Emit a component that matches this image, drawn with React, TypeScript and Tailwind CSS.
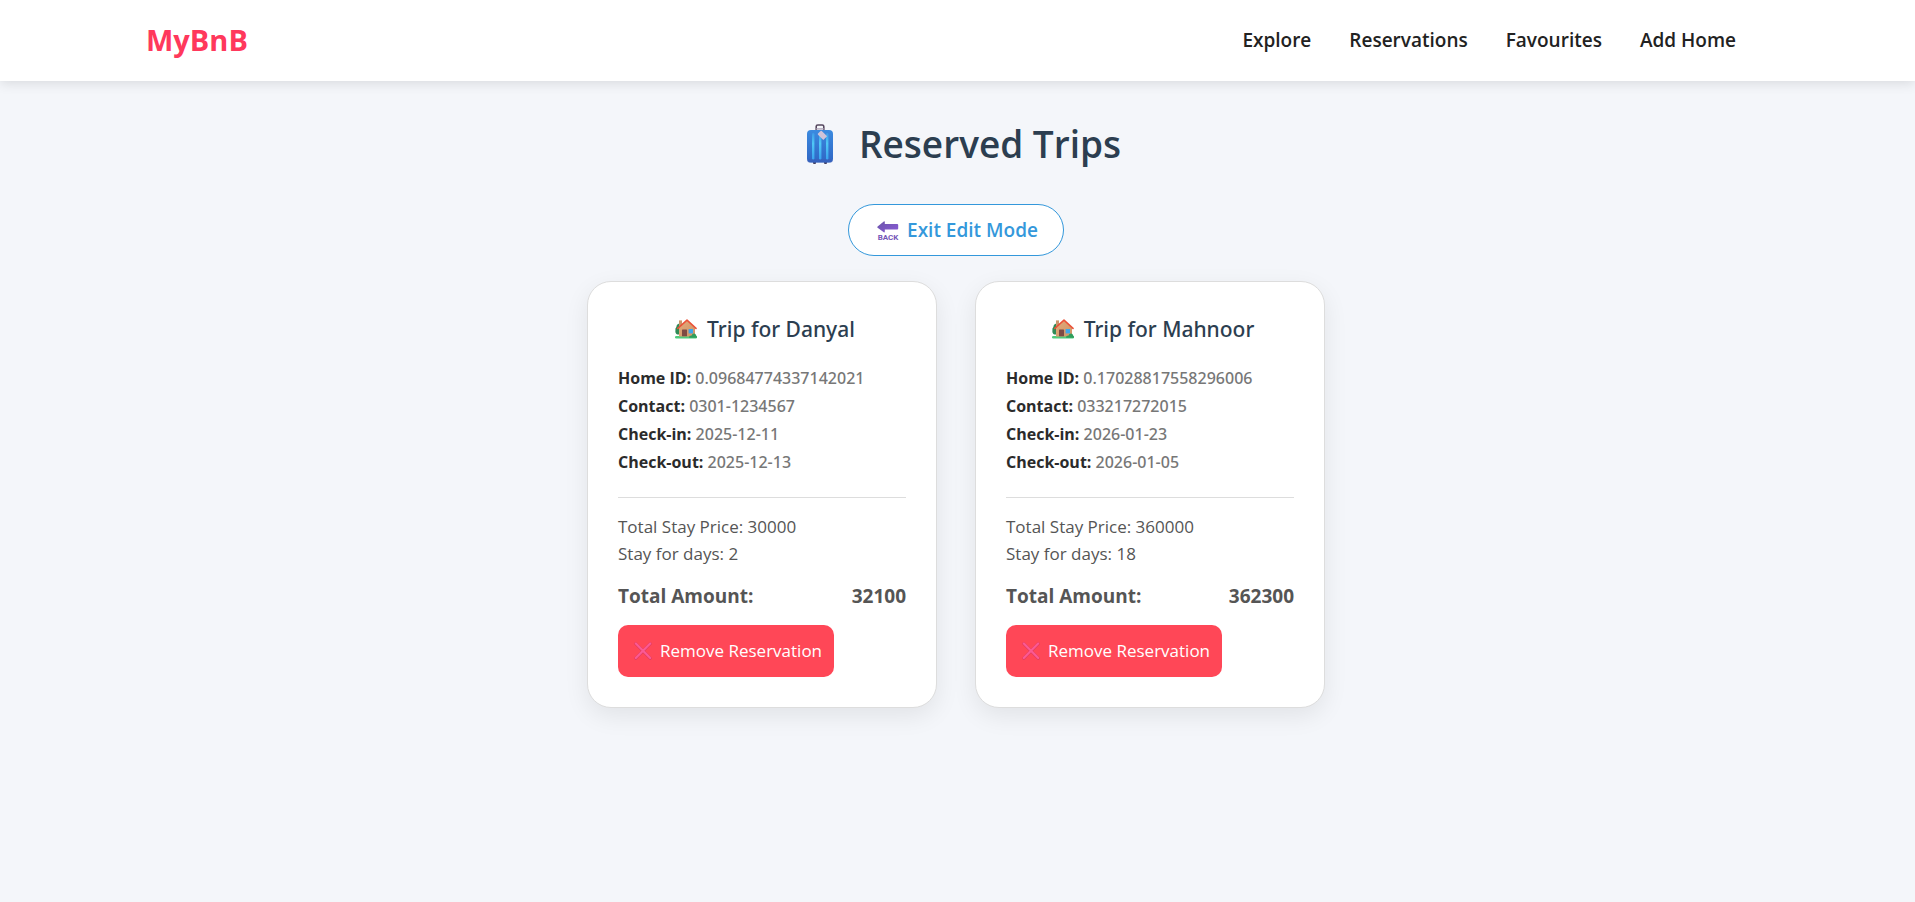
import type { ReactNode } from "react";

type Trip = {
  name: string;
  homeId: string;
  contact: string;
  checkIn: string;
  checkOut: string;
  price: number;
  days: number;
  total: number;
};

const trips: Trip[] = [
  {
    name: "Danyal",
    homeId: "0.09684774337142021",
    contact: "0301-1234567",
    checkIn: "2025-12-11",
    checkOut: "2025-12-13",
    price: 30000,
    days: 2,
    total: 32100,
  },
  {
    name: "Mahnoor",
    homeId: "0.17028817558296006",
    contact: "033217272015",
    checkIn: "2026-01-23",
    checkOut: "2026-01-05",
    price: 360000,
    days: 18,
    total: 362300,
  },
];

const links = ["Explore", "Reservations", "Favourites", "Add Home"];

function SuitcaseIcon() {
  return (
    <svg viewBox="0 0 26 40" className="h-10 w-[26px]" aria-hidden="true">
      <defs>
        <linearGradient id="case-body" x1="0" y1="0" x2="0" y2="1">
          <stop offset="0" stopColor="#3b8be0" />
          <stop offset="1" stopColor="#2f66c4" />
        </linearGradient>
        <linearGradient id="case-rib" x1="0" y1="0" x2="0" y2="1">
          <stop offset="0" stopColor="#3f9ae6" />
          <stop offset="0.4" stopColor="#4fc8f6" />
          <stop offset="1" stopColor="#3aa3ee" />
        </linearGradient>
      </defs>
      <path d="M9.2 6V2.6Q9.2 1 10.8 1h4.4q1.6 0 1.6 1.6V6" fill="none" stroke="#56485f" strokeWidth="1.6" />
      <path d="M9 4.9h8" stroke="#a79bb0" strokeWidth="1.2" />
      <rect x="6" y="37" width="3" height="3" rx="1" fill="#45405f" />
      <rect x="17" y="37" width="3" height="3" rx="1" fill="#45405f" />
      <rect x="0" y="6" width="26" height="32.5" rx="4" fill="url(#case-body)" />
      <rect x="0.4" y="35" width="25.2" height="3.4" rx="1.7" fill="#3c5fb8" opacity=".6" />
      <rect x="5" y="9" width="2.4" height="26.5" rx="1.2" fill="url(#case-rib)" />
      <rect x="12" y="9" width="2.4" height="26.5" rx="1.2" fill="url(#case-rib)" />
      <rect x="19" y="9" width="2.4" height="26.5" rx="1.2" fill="url(#case-rib)" />
      <path d="M11 9.6 13.6 7q.6-.5 1.2 0l5.3 5.2-3.8 3.9-5.3-5.3q-.5-.6 0-1.2Z" fill="#cfc3d8" />
    </svg>
  );
}

function BackIcon() {
  return (
    <svg viewBox="0 0 22 22" className="size-[22px] overflow-visible" aria-hidden="true">
      <defs>
        <linearGradient id="back-arrow" x1="0" y1="0" x2="1" y2="1">
          <stop offset="0" stopColor="#6a55a8" />
          <stop offset="1" stopColor="#8a5ad8" />
        </linearGradient>
      </defs>
      <path
        d="M.6 7.4 6.8 2.4q1-.6 1 .6v2h12.4q1 0 1 1v3.6q0 1-1 1H7.8v2q0 1.2-1 .6L.6 8.8q-.8-.7 0-1.4Z"
        fill="url(#back-arrow)"
      />
      <text
        x="11"
        y="21.4"
        textAnchor="middle"
        fontSize="8"
        fontWeight="700"
        fill="#7556b8"
        className="font-[Roboto,sans-serif]"
      >
        BACK
      </text>
    </svg>
  );
}

function HouseIcon() {
  return (
    <svg viewBox="0 0 22 20" className="h-5 w-[22px]" aria-hidden="true">
      <defs>
        <linearGradient id="house-wall" x1="0" y1="0" x2="1" y2="1">
          <stop offset="0" stopColor="#e2ab7a" />
          <stop offset="1" stopColor="#cf9468" />
        </linearGradient>
      </defs>
      <path d="M4.4 4.4Q1.4 5 1.4 8 0 9.4.4 11.4 0 14.4 2.4 15.4H5Z" fill="#2f8a56" />
      <rect x="0" y="17" width="22" height="2.6" rx="1.3" fill="#4fcb7c" />
      <rect x="4" y="1.4" width="3" height="6" fill="#c9956b" />
      <path d="M4 9 12 1.6 20 9v8.4H4Z" fill="url(#house-wall)" />
      <path d="M2.8 9.4 12 1.2l9 8.2" fill="none" stroke="#ea5238" strokeWidth="1.6" strokeLinecap="round" strokeLinejoin="round" />
      <rect x="7" y="10.4" width="5" height="6.8" rx=".5" fill="#7d4a44" />
      <rect x="13.6" y="10" width="4.4" height="4.4" fill="#3ea6ea" />
      <path d="M14 18.8q0-2.4 2.6-2.4.6-2 2.4-2t2.2 2.2q.8.4.8 2.2Z" fill="#2f9e5c" />
    </svg>
  );
}

function CrossIcon() {
  return (
    <svg viewBox="0 0 18 18" className="size-[18px]" aria-hidden="true">
      <path d="M1.8 1.8 16.2 16.2M16.2 1.8 1.8 16.2" stroke="#dd3a62" strokeWidth="3" strokeLinecap="round" />
      <path d="M1.8 1.6 16.2 16M16.2 1.6 1.8 16" stroke="#fb5a94" strokeWidth="2.1" strokeLinecap="round" />
    </svg>
  );
}

function Detail({ label, children }: { label: string; children: ReactNode }) {
  return (
    <p>
      <strong className="font-['Open_Sans'] font-bold text-[#2b2b2b]">{label}:</strong> {children}
    </p>
  );
}

function TripCard({ trip }: { trip: Trip }) {
  return (
    <article className="w-[350px] rounded-3xl border border-[#dddddd] bg-white p-[30px] text-[#555555] shadow-[0_8px_25px_rgba(0,0,0,0.08)]">
      <h2 className="flex items-center justify-center gap-2.5 pl-1.5 font-['Noto_Sans'] text-[21px] leading-[34px] font-medium text-[#2c3e50]">
        <HouseIcon />
        Trip for {trip.name}
      </h2>
      <div className="mt-[18px] font-['Noto_Sans'] text-[16px] leading-7 font-medium text-[#777777]">
        <Detail label="Home ID">{trip.homeId}</Detail>
        <Detail label="Contact">{trip.contact}</Detail>
        <Detail label="Check-in">{trip.checkIn}</Detail>
        <Detail label="Check-out">{trip.checkOut}</Detail>
      </div>
      <hr className="mt-[21px] mb-[15px] border-[#dddddd]" />
      <div className="text-[17px] leading-[27px]">
        <p>Total Stay Price: {trip.price}</p>
        <p>Stay for days: {trip.days}</p>
      </div>
      <p className="mt-[13px] flex justify-between text-[19px] leading-8 font-bold">
        <span>Total Amount:</span>
        <span>{trip.total}</span>
      </p>
      <button
        type="button"
        className="mt-[13px] flex h-[52px] items-center gap-2 rounded-[10px] bg-[#ff4757] pr-3 pl-4 text-[17px] text-white"
      >
        <CrossIcon />
        Remove Reservation
      </button>
    </article>
  );
}

export default function App() {
  return (
    <div className="min-h-screen bg-[#f4f6fa] font-['Open_Sans','Noto_Sans',sans-serif]">
      <header className="bg-white shadow-[0_2px_12px_rgba(0,0,0,0.12)]">
        <nav className="flex h-[81px] items-center justify-between pr-[179px] pl-[146px]">
          <a href="#" className="pb-0.5 text-[29px] font-bold text-[#ff385c]">
            MyBnB
          </a>
          <ul className="flex gap-[38px] text-[19px] font-semibold text-[#222222]">
            {links.map((link) => (
              <li key={link}>
                <a href="#">{link}</a>
              </li>
            ))}
          </ul>
        </nav>
      </header>
      <main className="flex flex-col items-center pt-[35px] pr-[3px]">
        <h1 className="flex items-center gap-[26px] pl-4 text-[37px] leading-[56px] font-semibold text-[#2c3e50]">
          <SuitcaseIcon />
          Reserved Trips
        </h1>
        <button
          type="button"
          className="mt-8 flex h-[52px] items-center gap-2 rounded-full border border-[#3498db] bg-white pr-[25px] pl-7 text-[19px] font-semibold text-[#3498db]"
        >
          <BackIcon />
          Exit Edit Mode
        </button>
        <section className="mt-[25px] flex flex-wrap justify-center gap-[38px]">
          {trips.map((trip) => (
            <TripCard key={trip.name} trip={trip} />
          ))}
        </section>
      </main>
    </div>
  );
}
